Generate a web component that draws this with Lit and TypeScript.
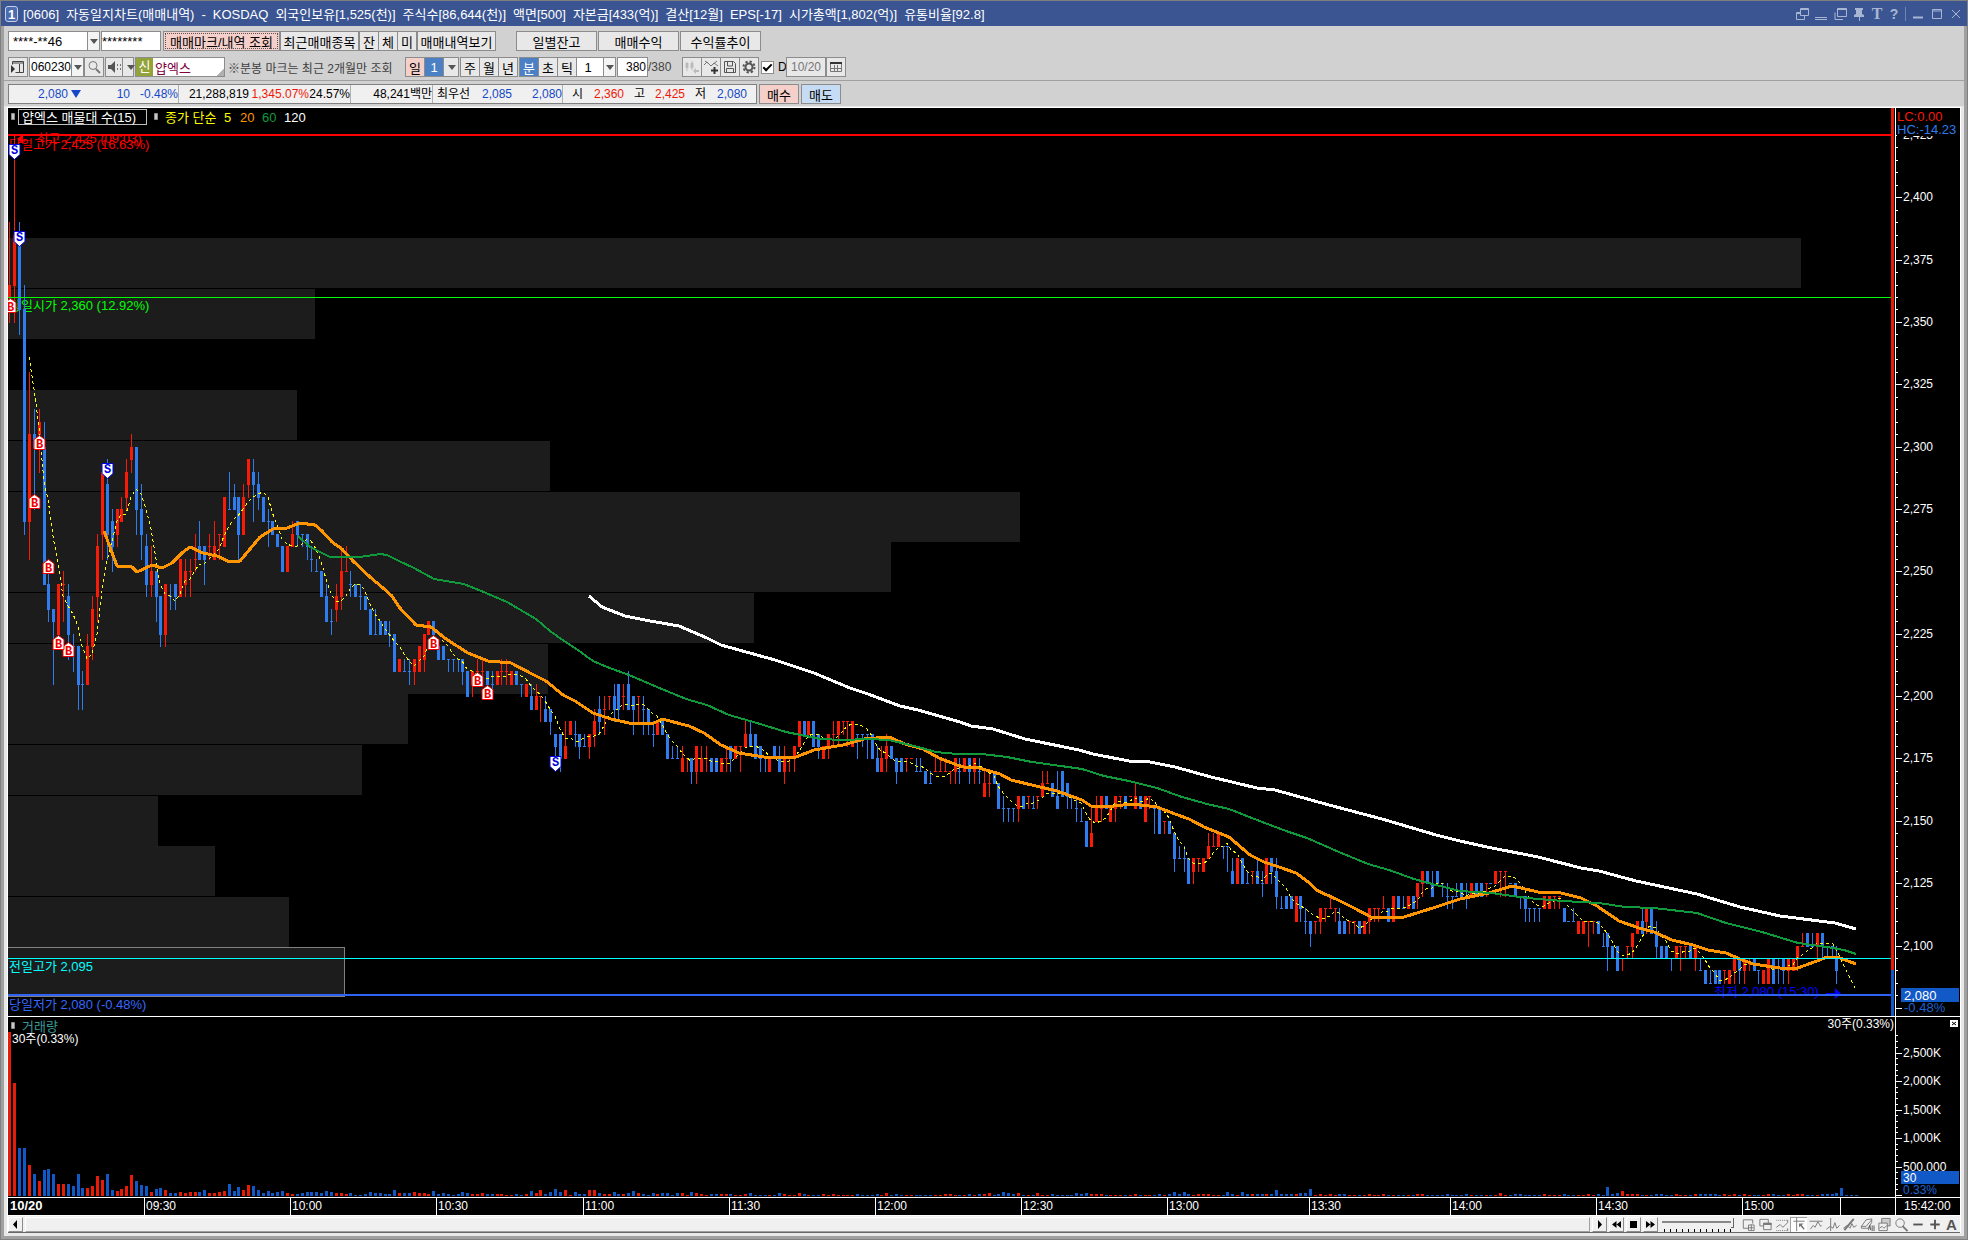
import { LitElement, html, svg, css } from "lit";
import { customElement, property } from "lit/decorators.js";

const UP = "#f71b08";
const DOWN = "#2f7cee";

/*
 * One candle per minute, prices without their leading 2.
 * Two numbers: body top and bottom. Three: high, open = close, low.
 * Four: high, body top, body bottom, low.
 */
const CANDLES = `
r390 365 360 350,r425 385 365 350,b390 385 355 345,b365 355 270 265,r330 305 270 255,b315 305 300 275,r315 310 305 290,b310 300 245 245,b250 245 235 230,b235 235 230 205,
r245 225,r250 245 230,b245 240 225 215,b225 220 210,b220 220 205 195,b210 205 195,r225 220 205 205,r240 235 220 215,r265 260 240 230,r290 290 265 255,
b295 285 265 255,b275 270 260 250,r275 275 265 260,r280 275 270 270,r295 290 280 275,r305 300 295 290,b300 300 275 265,b285 275 265 255,b265 260 245 240,r260 250 245 240,
b250 250 240 230,b240 240 225 220,r245 245 225 220,b245 240 235,b245 245 240 235,r255 240,r255 250 245 240,r255 250 240,r265 255 250,b270 260 255 255,
b260 260 255 245,r265 260 255,r270 260 255 255,r265 265 255,r280 260,b290 275 275,b285 280 275 275,b280 280 265 255,r285 280 265 265,r295 295 285 280,
b295 290 285 270,b290 285 280 275,b280 270,b275 270 260,b270 265,b265 260,b260 250,r260 250,r270 265 260 260,b270 270 265 260,
b265 265 260,b265 265 260 255,b260 255 250,b255 250 250,b250 240,b245 240 230 230,b235 230 225,r245 240 235 230,r260 250 240 235,r260 250 250,
b250 245 240,b245 240,b245 240 235,b240 235,b235 225,b235 225 225,b230 225,b230 225,b230 225 220,b225 210,
r215 210,b215 210 210,b215 210 205,r215 215 210 205,r220 210,r225 225 215 210,r230 225,b230 230 225 220,b220 220 215 215,b220 215,
b215 215 210,b215 215 210,b215 215 210,b215 215 210 205,b210 200,r210 210 205 200,r215 210 205,r215 210 205,b210 205,b210 205 200,
r210 210 205 205,r215 210 205,r215 210 205,r210 205,b210 205,b205 205 200,r205 200,b205 200 195 195,r205 200 195 195,r200 200 190,
b200 195 190 190,b195 195 190 185,b185 185 180 175,b185 185 175 170,r190 180 175 175,r190 185,b190 185 180,b185 185 180 175,b185 180 180,r185 185 180 175,
r195 190 185 180,b200 195 190 185,r200 195 185,r200 200 195,b205 200 195 190,b205 205 195 190,r205 200 195,b210 205 195 195,b200 200 195 185,r200 200 190,
b200 195 185,b195 195 190 185,b190 185 180,r190 185,b190 185,b185 175,b180 175 175,b180 175 175,r180 175 170 170,r175 175 170,
b175 175 170 165,r180 180 170 165,r180 175 170 170,r180 175 170,b175 170,b175 170,r175 170,r180 175 170,b180 180 175 170,r180 175,
r180 180 170,r190 185 180 180,b190 185 180 180,b185 185 175 175,b180 180 175 170,b175 175 170,r175 170,b180 175,b180 175 170 170,r180 175 170 165,
r175 175 170,r180 180 175 170,r190 180,b190 185,r190 185,b190 180,b185 185 180 175,r180 175,r185 185 180 175,r190 185 180,
r190 190 185 180,r190 190 185,r190 190 180,r190 180,b185 185 175,b185 185 180,b185 185 175,b185 175,b180 175 170 170,r180 175 170 170,
r185 180 175 170,b180 175,b175 175 170 165,b175 170,r175 175 170,r175 175 175,b175 170 170,b175 170 170,b170 165,b170 165 165,
r175 170 170,r175 170 170,r175 170 170,r170 170 165,r175 175 170 165,b175 170 165,r175 170,b175 175 170 165,r175 175 170 165,b175 170 165,
r170 165 160 160,r170 165 160,b170 165,b165 155,b160 155 150,b155 155 150,b155 155 150,r160 160 155 150,b160 155,r160 160 155,
b160 155 155,r160 160 155,r170 165 160 160,r170 165 165,b165 160,b170 160 155 155,b170 160,b165 165 160 155,b160 160 155,b160 155 150,
b155 150 150,b150 140,r155 145 140 140,r160 155 150 150,r160 160 155 150,b160 155,r155 150,r160 160 155 150,r160 160 155,b160 155,
r160 160 160,r165 160 155 155,b160 155,r160 150,r160 160 155,b155 155 145,b155 145,r150 150 145,b150 145,b145 145 135 130,
b140 135 135,b140 135 130,b135 125,r135 135 130 125,r135 135 130,r135 130,r145 140 135 135,r145 140 140,r145 140,b140 140 135,
b140 140 130,b135 130 125 125,r135 125,b135 125,b130 125 125,r130 130 125,b135 130 125 125,b130 125 120,r135 125,b135 135 130 125,
b135 130 120 115,b120 115 115,b120 115,b120 115,r120 110,b120 120 115 110,b115 110 105,b110 110 105 100,r110 110 105,r115 115 110 105,
r115 115 110,r120 115 115,r115 115 110,b115 110 105 105,b110 105,r110 110 105,r110 110 105,b110 105,r110 105,r115 115 110 105,
r115 115 110,r115 115 110,r120 115 115,b115 110,r120 110,b120 115,b120 115 115,r120 115,b120 115,r125 125 120 115,
r130 130 125 120,b130 125,b130 125 120 120,b130 130 125 125,b125 125 120,b125 120 115,b120 120 115,b125 120 120,b125 120,b125 120 115,
r125 120,b125 120,b125 120,r125 125 120,b125 125 125,r130 125,r130 130 120,r130 130 120,b125 125 125,b125 120,
b120 120 115,b120 120 115 110,b115 115 110,b115 115 110,b115 115 110,r120 115,r120 115,r120 120 115,r120 120 115,b115 110,
b110 110 110,b115 110 110,r110 105,r110 105,r110 110 100,r110 110 105,b110 105,b105 100 100,b105 105 100 90,b100 95,
b100 100 90 90,r95 95 90,r100 100 95,r105 105 100 95,r110 105,b115 110 105 105,r115 115 110 105,b115 105,b110 105 100 95,b100 95,
b100 95,b95 95 90,r100 95,r100 100 90,r100 100 95,b100 95,r100 100 95 90,b95 90 90,b90 85,b90 85 85,
b90 85,b90 85,r90 90 85,r90 85,r95 95 90 85,b95 95 90 85,r95 95 90 85,r95 95 90,b95 90,b90 90 85,
r90 85,r95 85,b95 85,b95 95 85,b95 95 90 85,r95 95 90 85,r95 90,r100 100 95 90,r105 100 100,b105 100,
b105 100 100,r105 105 100 95,b105 105 100 95,b100 100 95,b100 100 95,b100 95 90 85,b80 80,b80 80,b80 80,b80 80`;

interface Candle { up: boolean; high: number; top: number; bottom: number; low: number; }

const candles: Candle[] = CANDLES.replace(/\n/g, "").split(",").map((c) => {
  const n = c.slice(1).split(" ").map((v) => 2000 + Number(v));
  const [high, top, bottom, low] =
    n.length === 2 ? [n[0], n[0], n[1], n[1]] : n.length === 3 ? [n[0], n[1], n[1], n[2]] : n;
  return { up: c[0] === "r", high, top, bottom, low };
});

const VOLUMES: number[] = [
  164, 113, 48, 48, 31, 22, 15, 26, 27, 22, 12, 12, 12, 10, 22, 8, 8, 10, 20, 16, 22, 6, 5, 7, 10, 21, 15, 11, 10, 4,
  7, 8, 6, 3, 3, 4, 3, 4, 4, 4, 6, 3, 3, 4, 5, 12, 5, 9, 6, 11, 10, 6, 3, 5, 3, 4, 5, 3, 2, 2, 3, 4, 4, 4, 3, 5, 4, 3, 3,
  2, 3, 1, 1, 2, 4, 3, 3, 2, 2,
  ...(
    "6333433252" + "3212432232" + "2221121253" + "6247461422" + "6632242235" + "3213233133" + "1432122222" +
    "1123111113" + "2113211121" + "2111121112" + "131211" +
    "1111111221" + "1121223124" + "3231113112" + "1111323222" + "1111112111" + "1212424212" + "2211142142" +
    "2222262222" + "3371212122" + "1111211211" + "111122" +
    "1111211121" + "1111131122" + "1111211121" + "1112121923" + "5222111221" + "1211122222" + "1212121111" +
    "2211212211" + "122238111"
  ).split("").map(Number),
];

const barX = (i: number): number => Math.floor(1.9 + 4.872 * i);
const priceY = (p: number): number => Math.round(189 + (2360 - p) * 2.4943);

const candlePath = (up: boolean): string =>
  candles
    .map((c, i) => {
      if (c.up !== up) return "";
      const x = barX(i);
      const h = priceY(c.high), l = priceY(c.low), t = priceY(c.top), b = priceY(c.bottom);
      return `M${x} ${h}h1v${l - h + 1}h-1zM${x - 1} ${t}h3v${b - t + 1}h-3z`;
    })
    .join("");

const volumePath = (up: boolean): string =>
  VOLUMES.map((v, i) => (i < candles.length && candles[i].up === up ? `M${barX(i) - 1} ${179 - v}h3v${v}h-3z` : "")).join("");

const averagePath = (span: number): string => {
  const points: string[] = [];
  for (let i = span - 1; i < candles.length; i++) {
    let sum = 0;
    for (let k = i - span + 1; k <= i; k++) sum += candles[k].up ? candles[k].top : candles[k].bottom;
    points.push(`${barX(i)},${priceY(sum / span)}`);
  }
  return points.join(" ");
};

const MA20 = "96,423 109,458 124,459 129,464 144,457 154,460 164,455 174,445 182,439 195,445 209,448 222,454 232,453 242,441 252,429 265,421 279,420 292,415 307,417 314,423 324,434 334,441 345,453 362,469 375,480 384,488 391,499 408,517 423,519 438,531 460,545 480,553 503,555 524,566 538,573 555,587 567,593 585,605 603,611 621,615 646,615 654,611 681,618 696,625 713,637 731,645 756,649 788,649 806,642 835,637 856,631 881,629 897,636 915,641 931,650 949,657 956,659 971,660 992,666 1003,672 1028,678 1049,683 1074,692 1083,698 1106,698 1124,696 1149,699 1167,706 1181,711 1196,719 1221,729 1242,747 1256,754 1271,759 1288,765 1299,773 1310,783 1328,791 1346,800 1363,809 1396,809 1428,799 1452,791 1481,785 1504,778 1530,784 1553,785 1573,790 1589,798 1611,813 1631,820 1646,824 1664,832 1685,837 1700,842 1718,845 1732,851 1745,856 1772,860 1787,861 1809,853 1819,849 1832,850 1848,856";
const MA60 = "290,428 302,439 322,449 352,449 372,446 379,447 391,453 406,460 426,471 456,476 478,485 499,494 528,511 542,523 556,533 567,540 585,553 599,559 621,567 649,579 678,591 699,597 721,607 749,615 778,624 813,631 835,632 860,631 881,632 910,639 928,644 949,646 974,646 999,649 1024,654 1053,658 1074,661 1096,668 1121,673 1149,680 1174,689 1199,696 1221,701 1249,712 1278,723 1299,730 1331,744 1360,756 1381,762 1406,771 1428,777 1452,783 1483,785 1519,790 1555,793 1591,795 1617,799 1646,800 1689,805 1718,815 1754,824 1790,835 1819,839 1836,842 1848,846";
const MA120 = "581,488 594,499 617,508 642,513 671,518 699,530 713,537 731,542 767,552 806,565 842,580 860,586 892,598 910,602 952,614 963,618 985,621 1017,631 1071,642 1085,646 1121,653 1142,654 1167,659 1203,669 1249,680 1267,682 1321,697 1374,711 1428,727 1452,733 1479,739 1530,749 1573,760 1591,763 1628,773 1689,786 1732,799 1772,808 1827,815 1848,821";

/* Width of each band of the volume-by-price profile, from the top band down. */
const PROFILE = [1793, 307, 0, 289, 542, 1012, 883, 746, 540, 400, 354, 150, 207, 281, 336];

const MARKERS: [string, number, number][] = [
  ["S", 6, 36], ["S", 11, 123], ["S", 99, 355], ["S", 547, 648],
  ["B", 2, 190], ["B", 31, 327], ["B", 26, 386], ["B", 40, 451], ["B", 60, 534], ["B", 50, 527],
  ["B", 425, 527], ["B", 469, 564], ["B", 479, 577],
];

const TIMES: [number, string][] = [
  [136, "09:30"], [282, "10:00"], [428, "10:30"], [575, "11:00"], [721, "11:30"], [867, "12:00"], [1013, "12:30"],
  [1159, "13:00"], [1301, "13:30"], [1442, "14:00"], [1588, "14:30"], [1734, "15:00"], [1832, ""],
];

const chartFont = css`
  text { font-family: "Liberation Sans", "Noto Sans CJK KR", sans-serif; font-size: 13px; }
  .axis { font-size: 12px; fill: #fff; }
`;

@customElement("price-chart")
export class PriceChart extends LitElement {
  static styles = [chartFont, css`
    :host { display: flex; min-height: 0; background: #000; border-bottom: 1px solid #fff; }
    .plot { flex: 1; min-width: 0; height: 100%; display: block; }
    .strip { width: 3px; margin-right: 1px; display: flex; flex-direction: column; background: #1259c8; }
    .rise { height: 862px; background: #e81a08; }
    .scale { width: 64px; height: 100%; border-left: 1px solid #fff; display: block; }
    .mark { font-size: 12px; font-weight: bold; font-family: "Liberation Mono", monospace; text-anchor: middle; }
    .legend { font-size: 13px; }
  `];

  private marker([kind, x, y]: [string, number, number]) {
    const sell = kind === "S";
    const color = sell ? "#0000e0" : "#f00000";
    const d = sell ? "M-5.5 .5h11v10l-5.500 5l-5.500-5z" : "M-5.500 14.500h11v-10l-5.500-4l-5.500 4z";
    return svg`<g transform="translate(${x + 0.5} ${y})">
      <path d=${d} fill="#fff" stroke=${color}></path>
      <text class="mark" y=${sell ? 10 : 13} fill=${color}>${kind}</text></g>`;
  }

  private ticks() {
    const out = [];
    for (let p = 2425; p >= 2075; p -= 5) {
      const y = priceY(p);
      const major = p % 25 === 0;
      out.push(svg`<rect y=${y} width=${major ? 6 : 2} height="1" fill="#fff"></rect>`);
      if (major && p > 2075) out.push(svg`<text class="axis" x="7" y=${y + 4}>${p.toLocaleString("en-US")}</text>`);
    }
    return out;
  }

  render() {
    return html`
      <svg class="plot" role="img" aria-label="분봉 차트">
        <g shape-rendering="crispEdges">
          ${PROFILE.map((w, i) => svg`<rect y=${Math.round(130 + i * 50.7)} width=${w} height=${i === 14 ? 49 : 50} fill="#1c1c1c"></rect>`)}
          <path d="M0 839.500h336.500v49H0" fill="none" stroke="#808080"></path>
        </g>
        <text x="1" y="41" fill="#f00">당일고가 2,425 (16.63%)</text>
        <text x="12" y="35" fill="#f00">← 최고 2,425 (09:03)</text>
        <path d="M9 31l6-5v10z" fill="#f00"></path>
        <text x="1" y="202" fill="#0f0">당일시가 2,360 (12.92%)</text>
        <g shape-rendering="crispEdges">
          <path d=${candlePath(true)} fill=${UP}></path>
          <path d=${candlePath(false)} fill=${DOWN}></path>
        </g>
        <g fill="none" stroke-linejoin="round" shape-rendering="crispEdges">
          <polyline points=${averagePath(5)} stroke="#ff0" stroke-dasharray="3 3"></polyline>
          <polyline points=${MA20} stroke="#ff9500" stroke-width="3"></polyline>
          <polyline points=${MA60} stroke="#109a3c" stroke-width="2"></polyline>
          <polyline points=${MA120} stroke="#fff" stroke-width="3"></polyline>
        </g>
        <text x="1706" y="888" fill="#00f">최저 2,080 (15:30)</text>
        <path d="M1818 885h9v-5l6 5.500l-6 5.500v-5h-9z" fill="#00f"></path>
        <g shape-rendering="crispEdges">
          <rect y="26" width="100%" height="2" fill="#f00"></rect>
          <rect y="189" width="100%" height="1" fill="#0f0"></rect>
          <rect y="850" width="100%" height="1" fill="#0ff"></rect>
          <rect y="886" width="100%" height="2" fill="#2f62f5"></rect>
        </g>
        <text x="1" y="863" fill="#0ff">전일고가 2,095</text>
        <text x="1" y="901" fill="#3568ff">당일저가 2,080 (-0.48%)</text>
        ${MARKERS.map((m) => this.marker(m))}
        <path d="M3.500 5.500h3v6h-3zM146.500 5.500h3v6h-3z" fill="#c8c8c8" stroke="#8c8c8c"></path>
        <rect x="10.500" y="1.500" width="128" height="15" fill="none" stroke="#c0c0c0"></rect>
        <text class="legend" x="14" y="14" fill="#fff">얍엑스 매물대 수(15)</text>
        <text class="legend" x="157" y="14" fill="#ff0">종가 단순</text>
        <text class="legend" x="216" y="14" fill="#ff0">5</text>
        <text class="legend" x="232" y="14" fill="#ff9500">20</text>
        <text class="legend" x="254" y="14" fill="#109a3c">60</text>
        <text class="legend" x="276" y="14" fill="#fff">120</text>
      </svg>
      <div class="strip"><div class="rise"></div></div>
      <svg class="scale" role="img" aria-label="가격축">
        <g shape-rendering="crispEdges">${this.ticks()}</g>
        <rect x="1" width="63" height="28" fill="#000"></rect>
        <text x="1" y="13" fill="#f71b08">LC:0.00</text>
        <text x="1" y="26" fill="#2f7cee">HC:-14.23</text>
        <rect x="5" y="880" width="58" height="14" fill="#1259c8"></rect>
        <text x="8" y="892" fill="#fff">2,080</text>
        <text x="8" y="904" fill="#1c62d0">-0.48%</text>
      </svg>`;
  }
}

@customElement("volume-chart")
export class VolumeChart extends LitElement {
  static styles = [chartFont, css`
    :host { display: block; background: #000; }
    .row { display: flex; }
    .pane { height: 180px; border-bottom: 1px solid #fff; }
    .times { height: 17px; border-bottom: 1px solid #fff; }
    .plot { flex: 1; min-width: 0; height: 100%; display: block; }
    .scale { width: 64px; height: 100%; border-left: 1px solid #fff; display: block; }
    .end { text-anchor: end; }
    .label { font-size: 12px; }
    .day { font-size: 13px; font-weight: bold; }
  `];

  private ticks() {
    const out = [];
    const labels = ["500,000", "1,000K", "1,500K", "2,000K", "2,500K"];
    for (let k = 0; k < 29; k++) {
      const y = Math.round(178 - k * 5.7);
      const major = k % 5 === 0;
      out.push(svg`<rect y=${y} width=${major ? 6 : 2} height="1" fill="#fff"></rect>`);
      if (major && k > 0 && k <= 25) out.push(svg`<text class="axis" x="7" y=${y + 4}>${labels[k / 5 - 1]}</text>`);
    }
    return out;
  }

  render() {
    return html`
      <div class="row pane">
        <svg class="plot" role="img" aria-label="거래량 차트">
          <path d="M3.500 5.500h3v6h-3z" fill="#c8c8c8" stroke="#8c8c8c"></path>
          <text x="14" y="14" fill="#3a9a98">거래량</text>
          <g shape-rendering="crispEdges">
            <path d=${volumePath(true)} fill="#e81a08"></path>
            <path d=${volumePath(false)} fill="#1259c8"></path>
          </g>
          <text class="label" x="4" y="26" fill="#fff">30주(0.33%)</text>
          <svg x="100%" overflow="visible"><text class="label end" y="11" x="-1" fill="#fff">30주(0.33%)</text></svg>
        </svg>
        <svg class="scale" role="img" aria-label="거래량축">
          <g shape-rendering="crispEdges">${this.ticks()}</g>
          <rect x="5" y="154" width="58" height="13" fill="#1259c8"></rect>
          <text class="axis" x="7" y="165">30</text>
          <text class="label" x="7" y="177" fill="#1c62d0">0.33%</text>
          <rect x="54" y="3" width="8" height="7" fill="#fff"></rect>
          <path d="M56 5l4 3M60 5l-4 3" stroke="#000"></path>
        </svg>
      </div>
      <div class="row times">
        <svg class="plot" role="img" aria-label="시간축">
          <text class="day" x="2" y="12" fill="#fff">10/20</text>
          ${TIMES.map(([x, t]) => svg`<rect x=${x} width="1" height="17" fill="#fff"></rect><text class="axis" x=${x + 2} y="12">${t}</text>`)}
        </svg>
        <svg class="scale" role="img" aria-label="현재 시각"><text class="axis" x="8" y="12">15:42:00</text></svg>
      </div>`;
  }
}

const TOOL_ICONS: Record<string, unknown> = {
  addPane: svg`<path d="M13 7V3H3v9h5" /><path d="M8.500 8.500h6v6h-6zM11.500 8v6M8 11.500h6" />`,
  panes: svg`<path d="M2.500 2.500h9v7h-9z" /><path d="M6.500 6.500h8v7h-8z" fill="#f0f0f0" /><path d="M6 7.500h9" stroke-width="2" />`,
  range: svg`<path d="M2 3.500h12M2 14.500h12" stroke-dasharray="1 1" /><path d="M2 11l4-3 3 3 5-5" /><path d="M14 3v3M14 12v3" />`,
  cross: svg`<path d="M2 4.500h12M5.500 1v14" /><path d="M8 7h5l-2 1.500 3 4-1 1-3.500-4L8 11z" fill="#777" stroke="none" />`,
  horizontal: svg`<path d="M1 4.500h14" /><path d="M2 13l3-4 2 2 3-6 3 5 1-1" />`,
  vertical: svg`<path d="M5.500 1v14" /><path d="M1 13l4-3 3 2 2-6 2 6 3-3" />`,
  trend: svg`<path d="M2 14L12 2" stroke-width="2" /><path d="M1 12l4-3 3 3 2-5 2 4 3-2" />`,
  eraseAll: svg`<path d="M2 10l5-7 6-1v4l-4 6H2zM2 10h5l6-7" /><path d="M9.500 14l1.500-5 1 5M13.500 9v6M15.500 9v6" stroke="#555" />`,
  overlay: svg`<path d="M5.500 1.500h9v8h-9z" fill="#ccc" /><path d="M2.500 6.500h9v8h-9z" fill="#f0f0f0" /><path d="M3 12l3-2 2 2 3-3" />`,
  zoom: svg`<circle cx="7" cy="6.500" r="4.500" /><path d="M10 10l5 5" stroke-width="2" />`,
  minus: svg`<path d="M3 8h10" stroke-width="2" stroke="#555" />`,
  plus: svg`<path d="M3 8h10M8 3v10" stroke-width="2" stroke="#555" />`,
};

@customElement("chart-footer")
export class ChartFooter extends LitElement {
  static styles = css`
    :host { display: flex; align-items: center; height: 15px; padding-top: 1px; background: #f0f0f0; border-bottom: 1px solid #696969; }
    button { font: bold 15px/15px "Liberation Sans", sans-serif; color: #555; padding: 0; margin: 0; width: 17px; height: 15px; border: 0; background: none; display: grid; place-items: center; }
    .raised { width: 15px; background: #f0f0f0; border: 1px solid; border-color: #fff #8c8c8c #8c8c8c #fff; margin-right: 2px; }
    .track { flex: 1; height: 13px; border: 1px solid; border-color: #fff #a0a0a0 #a0a0a0 #fff; margin-right: 2px; }
    .on { background: #fff; box-shadow: inset 1px 1px #a0a0a0; }
    .play { width: 9px; height: 9px; fill: #000; }
    .tool { width: 16px; height: 15px; fill: none; stroke: #777; }
    .speed { appearance: none; width: 72px; height: 15px; margin: 0 5px 0 2px;
      background: linear-gradient(#888, #888) 0 4px / 100% 2px no-repeat, repeating-linear-gradient(90deg, #000 0 1px, transparent 1px 6px) 2px 100% / 67px 3px no-repeat; }
    .speed::-webkit-slider-thumb { appearance: none; width: 3px; height: 10px; margin-top: -3px; background: #f0f0f0; border-right: 1px solid #666; border-bottom: 1px solid #666; }
  `;

  private play(label: string, d: string) {
    return html`<button class="raised" aria-label=${label}><svg class="play" viewBox="0 0 9 9"><path d=${d}></path></svg></button>`;
  }

  render() {
    return html`
      ${this.play("왼쪽", "M6 0v9L2 4.500z")}
      <div class="track"></div>
      ${this.play("재생", "M3 0v9l4-4.500z")}
      ${this.play("뒤로", "M4.500 1v7L0 4.500zM9 1v7L4.500 4.500z")}
      ${this.play("정지", "M1 1h7v7H1z")}
      ${this.play("앞으로", "M0 1v7l4.500-3.500zM4.500 1v7L9 4.500z")}
      <input class="speed" type="range" min="0" max="11" value="11" aria-label="속도" />
      ${Object.entries(TOOL_ICONS).map(([name, icon]) => html`
        <button class=${name === "cross" ? "on" : ""} aria-label=${name}><svg class="tool" viewBox="0 0 16 16">${icon}</svg></button>`)}
      <button aria-label="글꼴">A</button>`;
  }
}

@customElement("title-bar")
export class TitleBar extends LitElement {
  static styles = css`
    :host { display: flex; align-items: center; height: 25px; padding: 0 4px 0 4px; background: #3a5592; color: #fff; font-size: 13px; white-space: nowrap; }
    .number { width: 11px; height: 14px; border: 1px solid #c8d2ea; border-radius: 3px; background: #4c6cb0; display: grid; place-items: center; font-weight: bold; margin-right: 5px; }
    .fields { flex: 1; display: flex; align-items: baseline; gap: 7px; min-width: 0; overflow: hidden; }
    .icons { display: flex; align-items: center; gap: 5px; color: #a9b6d3; font: bold 16px "Liberation Serif", serif; }
    .icons svg { width: 14px; height: 14px; fill: none; stroke: #a9b6d3; }
    button { background: none; border: 0; padding: 0; color: inherit; font: inherit; display: grid; place-items: center; min-width: 12px; }
    .q { font-family: "Liberation Sans", sans-serif; font-size: 14px; }
    .bar { width: 1px; height: 14px; background: #7186b5; }
  `;

  private icon(label: string, shape: unknown) {
    return html`<button aria-label=${label}><svg viewBox="0 0 14 14">${shape}</svg></button>`;
  }

  render() {
    const fields = ["[0606]", "자동일지차트(매매내역)", "-", "KOSDAQ", "외국인보유[1,525(천)]", "주식수[86,644(천)]", "액면[500]",
      "자본금[433(억)]", "결산[12월]", "EPS[-17]", "시가총액[1,802(억)]", "유통비율[92.8]"];
    return html`
      <span class="number">1</span>
      <div class="fields">${fields.map((f) => html`<span>${f}</span>`)}</div>
      <div class="icons">
        ${this.icon("창 분리", svg`<path d="M5.500 2v6.500h8V1.500h-8zM5 2.500h9M5 5.500H1.500v7h8V9M1 6.500h4" />`)}
        ${this.icon("접기", svg`<path d="M1 10.500h12M1 12.500h12" />`)}
        ${this.icon("복사", svg`<path d="M4.500 1.500h9v8h-9zM4 2.500h10M2 5.500v7h8" />`)}
        ${this.icon("고정", svg`<path d="M3 1h8v2h-1v4l2 1v2H2V8l2-1V3H3z" fill="#a9b6d3" stroke="none" /><path d="M7.500 10v4" />`)}
        <button aria-label="글꼴">T</button>
        <button class="q" aria-label="도움말">?</button>
        <span class="bar"></span>
        ${this.icon("최소화", svg`<path d="M2 10.500h10" stroke-width="2" />`)}
        ${this.icon("최대화", svg`<path d="M2.500 2.500h9v9h-9zM2 4h10" />`)}
        ${this.icon("닫기", svg`<path d="M3 3l8 8M11 3l-8 8" />`)}
      </div>`;
  }
}

@customElement("app-root")
export class AppRoot extends LitElement {
  @property() account = "****-**46";

  static styles = css`
    :host { display: flex; flex-direction: column; box-sizing: border-box; height: 100vh; min-height: 1000px; border: 1px solid #808080; background: #a0a0a0;
      font: 13px "Liberation Sans", "Noto Sans CJK KR", sans-serif; color: #000; overflow: hidden; }
    .body { flex: 1; min-height: 0; display: flex; flex-direction: column; margin: 0 3px 3px; background: #e8e8e8; }
    .tools { background: #d1d1d1; height: 80px; display: flex; flex-direction: column; padding-left: 4px; white-space: nowrap; }
    .line { display: flex; align-items: center; height: 20px; margin-top: 5px; }
    .line + .line { margin-top: 6px; }
    .tools .quote-line { padding-top: 3px; margin-top: 3px; margin-left: -4px; padding-left: 4px; border-top: 1px solid #a0a0a0; }
    button, input, select { box-sizing: border-box; height: 20px; margin: 0; padding: 0; font: inherit; color: inherit; border: 1px solid #8c8c8c; border-radius: 0; background: #fff; }
    button { background: #e8e8e8; display: grid; place-items: center; flex: none; margin-right: -1px; white-space: nowrap; }
    button svg { width: 16px; height: 16px; fill: none; stroke: #777; }
    .g0 { margin-right: 0; }
    .g1 { margin-right: 1px; }
    .gap { margin-right: 2px; }
    .gap-xl { margin-right: 20px; }
    .combo { display: grid; grid-template: 20px / 1fr; flex: none; }
    .combo > * { grid-area: 1 / 1; }
    .combo select { appearance: none; padding-left: 4px; width: 100%; }
    .combo .code { padding-left: 1px; }
    .arrow { justify-self: end; width: 12px; height: 18px; margin: 1px; background: #f4f4f4; border-left: 1px solid #8c8c8c; display: grid; place-items: center; pointer-events: none; box-sizing: border-box; }
    .arrow::before { content: ""; border: 4px solid transparent; border-top: 5px solid #555; border-bottom: 0; }
    .w92 { width: 92px; } .w60 { width: 60px; } .w117 { width: 117px; } .w79 { width: 79px; } .w20 { width: 20px; } .w81 { width: 81px; }
    .w55 { width: 55px; } .w40 { width: 40px; } .w31 { width: 31px; } .w12 { width: 12px; } .w16 { width: 16px; } .w18 { width: 18px; }
    .pink { background: #f5cfca; }
    .focus { outline: 1px dotted #555; outline-offset: -3px; }
    .blue { background: #4c80c4; color: #fff; }
    .sky { background: #c6dcf4; }
    .small { font-size: 12px; }
    .stock { display: flex; align-items: center; box-sizing: border-box; flex: none; width: 90px; height: 20px; margin-left: 1px; border: 1px solid #8c8c8c; background: linear-gradient(135deg, transparent 50%, #b0b0b0 50%) 100% 100% / 7px 7px no-repeat #fff; color: #80003c; gap: 2px; }
    .new { background: #93a33a; color: #fff; width: 17px; height: 18px; line-height: 18px; text-align: center; }
    .note { color: #404040; font-size: 12px; flex: none; width: 177px; margin-left: 3px; }
    .right { text-align: right; padding-right: 1px; }
    .total { color: #444; width: 34px; font-size: 12px; }
    .check { appearance: none; flex: none; width: 13px; height: 13px; margin: 0 4px 0 3px; display: grid; place-items: center; }
    .check:checked::before { content: ""; width: 7px; height: 3px; border: solid #000; border-width: 0 0 2px 2px; transform: translateY(-1px) rotate(-45deg); }
    .d { width: 8px; font-size: 12px; }
    .date { color: #777; background: #e8e8e8; text-align: center; font-size: 12px; }
    .quote { box-sizing: border-box; display: grid; align-items: center; grid-template-columns: 59px 13px 49px 48px 71px 60px 41px 82px 38px 42px 50px 21px 41px 21px 40px 21px 41px; flex: none; width: 749px; height: 20px; margin-right: 2px; border: 1px solid #808080; background: #f0f0f0; text-align: right; font-size: 12px; line-height: 18px; }
    .quote .l { border-left: 1px solid #b0b0b0; }
    .dn { color: #1448c8; } .up { color: #f01808; }
    .tri { justify-self: end; border: 5px solid transparent; border-top: 8px solid #1448c8; border-bottom: 0; margin-bottom: 1px; }
    .frame { flex: 1; min-height: 0; display: flex; flex-direction: column; margin: 1px 3px 3px; border: 1px solid #fff; border-bottom: 0; }
    price-chart { flex: 1; }
  `;

  private arrowButton(width = "w12") {
    return html`<button class=${width} aria-label="목록"><svg viewBox="0 0 16 16" aria-hidden="true"><path d="M4 6h8l-4 5z" fill="#555" stroke="none"></path></svg></button>`;
  }

  render() {
    return html`
      <title-bar></title-bar>
      <div class="body">
        <div class="tools">
          <div class="line">
            <label class="combo w92 g1"><select aria-label="계좌"><option>${this.account}</option></select><span class="arrow"></span></label>
            <input class="w60 gap" aria-label="비밀번호" value="********" />
            <button class="w117 pink focus g0">매매마크/내역 조회</button>
            <button class="w79 g0">최근매매종목</button>
            <button class="w20">잔</button><button class="w20">체</button><button class="w20 g0">미</button>
            <button class="w79 gap-xl">매매내역보기</button>
            <button class="w81 g1">일별잔고</button>
            <button class="w81 g1">매매수익</button>
            <button class="w81">수익률추이</button>
          </div>
          <div class="line">
            <button class="w20 g1" aria-label="패널"><svg viewBox="0 0 16 16"><path d="M5.500 13.500h8v-11h-11v3M3 4h11" stroke="#444"></path><path d="M9.500 5v8" stroke="#444"></path><path d="M1 6v8l4-4z" fill="#333" stroke="none"></path></svg></button>
            <label class="combo w55"><select class="small code" aria-label="종목코드"><option>060230</option></select><span class="arrow"></span></label>
            <button class="w20 g1" aria-label="검색"><svg viewBox="0 0 16 16"><circle cx="7" cy="6.500" r="4"></circle><path d="M10 10l4 4" stroke-width="2"></path></svg></button>
            <button class="w18" aria-label="소리"><svg viewBox="0 0 16 16"><path d="M2 6h3l4-4v12l-4-4H2z" fill="#555" stroke="none"></path><path d="M11.500 5v6M14.500 5v6" stroke-dasharray="2 2"></path></svg></button>
            ${this.arrowButton("w12 g0")}
            <div class="stock"><span class="new">신</span>얍엑스</div>
            <span class="note">※분봉 마크는 최근 2개월만 조회</span>
            <button class="w20 pink">일</button><button class="w20 blue">1</button>${this.arrowButton("w16 g1")}
            <button class="w20">주</button><button class="w20">월</button><button class="w20 g1">년</button>
            <button class="w20 blue">분</button><button class="w20">초</button><button class="w20">틱</button>
            <label class="combo w40 g1"><select aria-label="주기"><option>&nbsp;1</option></select><span class="arrow"></span></label>
            <input class="w31 right small" aria-label="조회 봉수" value="380" /><span class="total">/380</span>
            <button class="w20" aria-label="캔들"><svg viewBox="0 0 16 16"><path d="M3 3v9M8 2v9" stroke="#bbb"></path><path d="M1.500 4h3v5h-3zM6.500 4h3v5h-3zM9 12l3-3v2h3v2h-3v2z" fill="#bbb" stroke="none"></path></svg></button>
            <button class="w20" aria-label="지표 추가"><svg viewBox="0 0 16 16"><path d="M1 6l3-3 4 4 3-3 4 3M2 2l3 2M9 6l5-4"></path><path d="M11.500 8v7M8 11.500h7" stroke="#333" stroke-width="2"></path></svg></button>
            <button class="w20" aria-label="저장"><svg viewBox="0 0 16 16"><path d="M2.500 2.500h9l2 2v9h-11zM5.500 3v4h5V3M4.500 13.500v-4h7v4" stroke="#555"></path></svg></button>
            <button class="w20" aria-label="설정"><svg viewBox="0 0 16 16"><circle cx="8" cy="8" r="3.500" stroke="#555" stroke-width="2"></circle><circle cx="8" cy="8" r="5.500" stroke="#555" stroke-width="2" stroke-dasharray="2.300 2"></circle></svg></button>
            <input class="check" type="checkbox" id="day" checked /><label class="d" for="day">D</label>
            <input class="w40 date" aria-label="날짜" value="10/20" />
            <button class="w20" aria-label="달력"><svg viewBox="0 0 16 16"><path d="M2.500 3.500h11v9h-11zM6.500 6v6M9.500 6v6M3 9.500h10" stroke="#777"></path><path d="M2 4h12" stroke="#333" stroke-width="2"></path></svg></button>
          </div>
          <div class="line quote-line">
            <div class="quote">
              <span class="dn">2,080</span><i class="tri"></i><span class="dn">10</span><span class="dn">-0.48%</span>
              <span class="l">21,288,819</span><span class="up">1,345.07%</span><span>24.57%</span>
              <span class="l">48,241백만</span><span class="l">최우선</span><span class="dn">2,085</span><span class="dn">2,080</span>
              <span class="l">시</span><span class="up">2,360</span><span>고</span><span class="up">2,425</span><span>저</span><span class="dn">2,080</span>
            </div>
            <button class="w40 pink gap">매수</button>
            <button class="w40 sky">매도</button>
          </div>
        </div>
        <div class="frame">
          <price-chart></price-chart>
          <volume-chart></volume-chart>
          <chart-footer></chart-footer>
        </div>
      </div>`;
  }
}
